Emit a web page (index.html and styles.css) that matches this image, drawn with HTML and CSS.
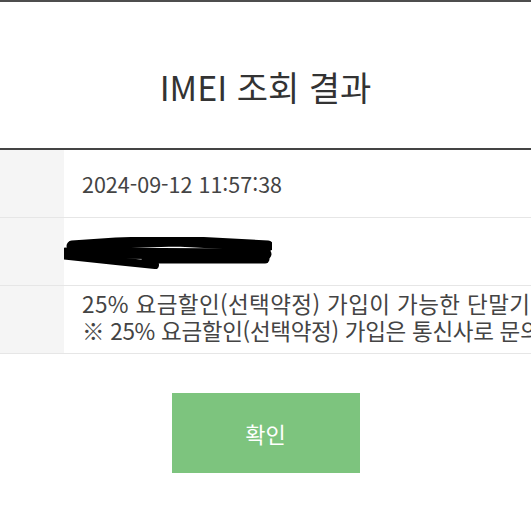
FILE: index.html
```html
<!DOCTYPE html>
<html lang="ko">
<head>
  <meta charset="UTF-8">
  <meta name="viewport" content="width=device-width, initial-scale=1.0">
  <title>IMEI 조회 결과</title>
  <link rel="stylesheet" href="styles.css">
</head>
<body>
  <div class="page">
    <h1 class="title">IMEI 조회 결과</h1>

    <table class="result">
      <tr>
        <th></th>
        <td>2024-09-12 11:57:38</td>
      </tr>
      <tr>
        <th></th>
        <td>
          <!-- 가린 부분 -->
          <svg class="scribble" width="216" height="34" viewBox="0 0 216 34">
            <g fill="none" stroke="#000" stroke-linecap="round" stroke-linejoin="round">
              <path d="M16 9 L60 6 L120 4 L212 9" stroke-width="11"/>
              <path d="M10 16 L210 17" stroke-width="11"/>
              <path d="M4 18 L60 24 L99 28" stroke-width="8"/>
              <path d="M90 22 L209 22" stroke-width="9"/>
            </g>
          </svg>
        </td>
      </tr>
      <tr>
        <th></th>
        <td class="notice">
          <span class="line">25% 요금할인(선택약정) 가입이 가능한 단말기입니다.</span>
          <span class="line note">※ 25% 요금할인(선택약정) 가입은 통신사로 문의하시기 바랍니다.</span>
        </td>
      </tr>
    </table>

    <div class="actions">
      <button class="btn-ok">확인</button>
    </div>
  </div>
</body>
</html>
```

FILE: styles.css
```css
body {
  margin: 0;
  padding: 0;
  background: #fff;
  font-family: "Noto Sans CJK KR", "Noto Sans", sans-serif;
  color: #444;
  overflow: hidden;
}
.page {
  border-top: 2px solid #4d4d4d;
}
.title {
  margin: 0;
  padding: 62px 0 38px;
  line-height: 46px;
  font-size: 34px;
  font-weight: 400;
  color: #333;
  text-align: center;
  border-bottom: 2px solid #444;
}
.result {
  width: 100%;
  border-collapse: collapse;
  table-layout: fixed;
}
.result th {
  width: 64px;
  background: #f5f5f5;
  padding: 0;
}
.result td {
  height: 67px;
  padding: 0 0 0 18px;
  font-size: 21.5px;
  white-space: nowrap;
  overflow: hidden;
  vertical-align: middle;
}
.result tr {
  border-bottom: 1px solid #e6e6e6;
}
.scribble {
  display: block;
  margin: 4px 0 0 -26px;
}
.result .notice {
  height: 62px;
  padding-bottom: 5px;
  font-size: 22.5px;
  line-height: 27px;
}
.line {
  display: block;
  letter-spacing: 0.4px;
}
.line.note {
  letter-spacing: -0.3px;
}
.actions {
  display: flex;
  justify-content: center;
  padding-top: 39px;
}
.btn-ok {
  width: 188px;
  height: 80px;
  border: none;
  background: #7dc47e;
  color: #fff;
  font-family: inherit;
  font-size: 22px;
  cursor: pointer;
}
```
